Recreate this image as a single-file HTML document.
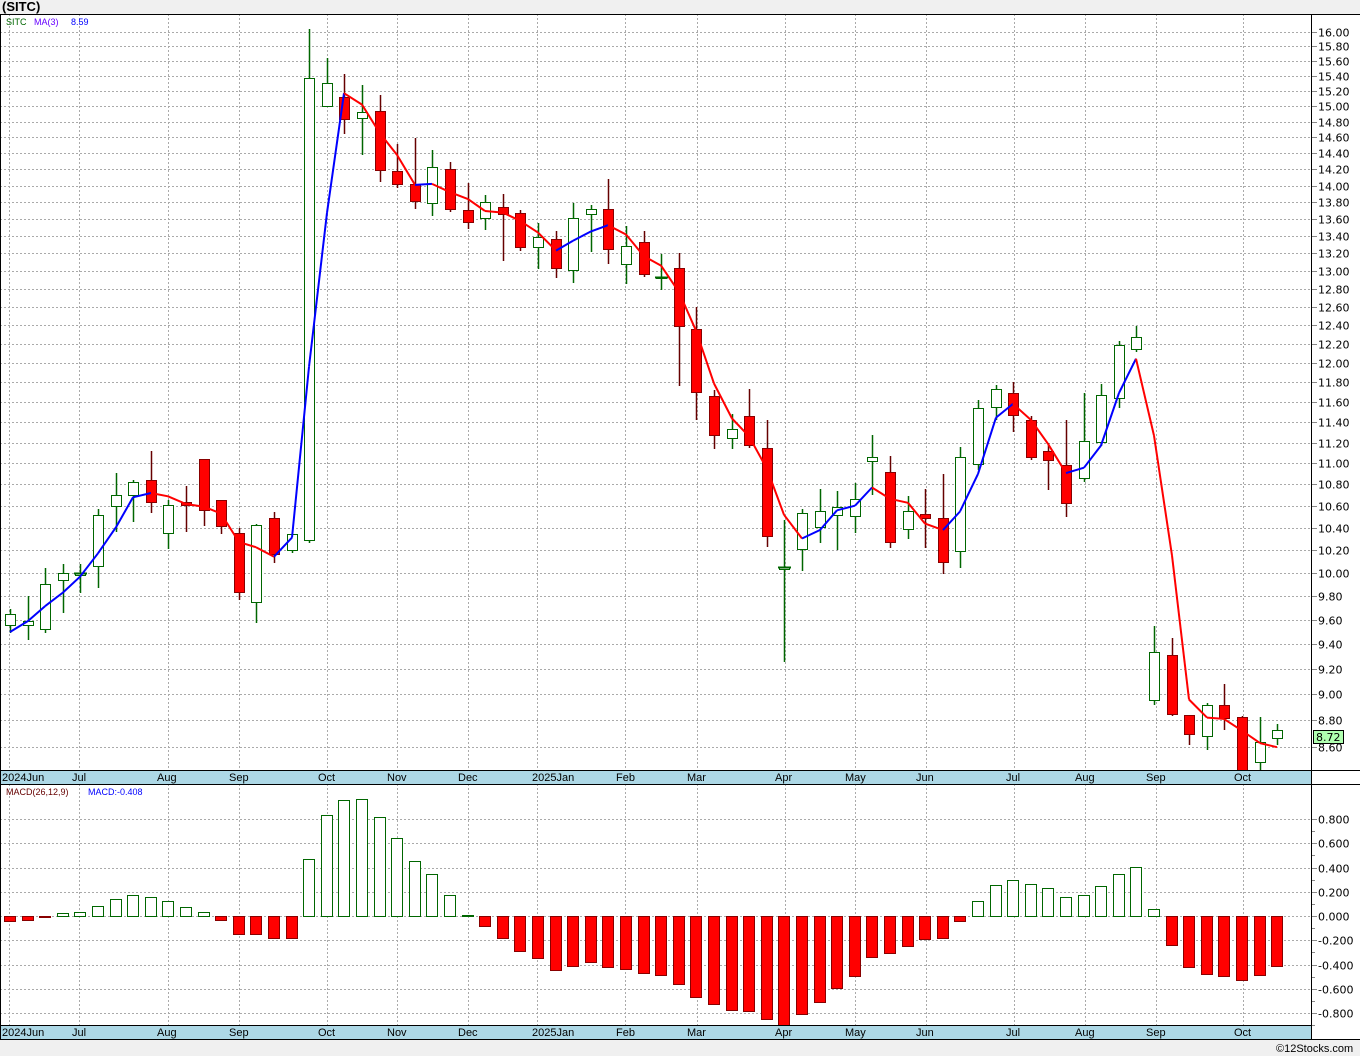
<!DOCTYPE html>
<html><head><meta charset="utf-8"><style>
html,body{margin:0;padding:0;background:#f0f0f0;width:1360px;height:1056px;overflow:hidden}
svg text{font-family:"Liberation Sans","DejaVu Sans",sans-serif}
svg text.ax{font-family:"DejaVu Sans","Liberation Sans",sans-serif}
</style></head><body>
<svg id="s" width="1360" height="1056" xmlns="http://www.w3.org/2000/svg"></svg>
<script>
var S=document.getElementById('s'),h='';
function L(x1,y1,x2,y2,c,w,d){h+='<line x1="'+x1+'" y1="'+y1+'" x2="'+x2+'" y2="'+y2+'" stroke="'+c+'" stroke-width="'+(w||1)+'"'+(d?' stroke-dasharray="'+d+'"':'')+'/>';}
function R(x,y,w,hh,f,s){h+='<rect x="'+x+'" y="'+y+'" width="'+w+'" height="'+hh+'" fill="'+f+'"'+(s?' stroke="'+s+'"':'')+'/>';}
function T(x,y,t,c,sz,ex){h+='<text x="'+x+'" y="'+y+'" fill="'+c+'" font-size="'+(sz||11)+'" '+(ex||'')+'>'+t+'</text>';}
R(0,14,1360,1026,'#fff');
T(2,11,'(SITC)','#000',13,'font-weight="bold"');
function yp(p){return 32+1151*Math.log(16/p);}
for(var v=8.6;v<=16.001;v+=0.2){var y=Math.round(yp(v))+.5;L(0,y,1311,y,'#aaa',1,'2,2');L(1311,y,1317,y,'#888');T(1318,y+4,v.toFixed(2),'#000',11,'class="ax"');}
var mx=[9,79,168,239,327,397,468,537,625,697,785,855,926,1014,1085,1156,1243];
mx.forEach(function(x){L(x+.5,14,x+.5,770,'#aaa',1,'2,2');L(x+.5,784,x+.5,1025,'#aaa',1,'2,2');});
function ym(v){return 916-v*121.25;}
for(var k=-4;k<=4;k++){var v=k*0.2;var y=Math.round(ym(v))+.5;L(0,y,1311,y,'#aaa',1,'2,2');L(1311,y,1317,y,'#888');T(1318,y+4,(k<0?'-':'')+Math.abs(v).toFixed(3),'#000',11,'class="ax"');}
for(var v=-0.9;v<=0.9;v+=0.2){var y=Math.round(ym(v))+.5;L(1311,y,1315,y,'#888');}
var C=[['g',614,625,609,633],['g',621,625,596,640],['g',584,629,568,633],['g',573,580,564,613],['g',573,575,564,593],['g',515,566,509,588],['g',495,506,473,532],['g',482,495,480,522],['r',480,502,451,513],['g',505,533,500,549],['r',502,505,486,532],['r',459,510,459,526],['r',500,526,500,534],['r',533,592,528,600],['g',525,602,524,623],['r',518,554,512,563],['g',534,550,534,553],['g',78,540,29,543],['g',83,106,58,106],['r',97,119,74,134],['g',112,118,85,155],['r',111,170,95,182],['r',171,184,144,188],['r',184,201,138,209],['g',167,203,150,216],['r',169,209,162,212],['r',210,222,183,229],['g',202,218,195,230],['r',207,214,194,261],['r',213,247,210,251],['g',237,247,223,269],['r',239,268,231,278],['g',218,270,203,283],['g',209,214,205,252],['r',209,249,179,264],['g',246,264,226,284],['r',242,274,231,277],['g',277,278,254,290],['r',268,326,253,386],['r',329,392,307,420],['r',396,435,390,449],['g',429,438,414,449],['r',416,445,389,448],['r',448,536,420,547],['g',567,569,520,662],['g',513,549,509,571],['g',511,527,489,543],['g',507,515,491,550],['g',499,516,483,533],['g',457,461,435,495],['r',472,542,456,548],['g',511,529,496,539],['r',514,518,489,548],['r',518,562,474,574],['g',457,551,447,568],['g',408,464,400,470],['g',389,407,385,420],['r',393,415,382,432],['r',420,457,416,460],['r',451,460,443,490],['r',465,503,420,517],['g',441,478,393,482],['g',395,442,384,446],['g',345,398,341,408],['g',337,349,326,352],['g',652,700,626,705],['r',655,714,638,716],['r',715,734,715,745],['g',705,736,703,750],['r',705,718,684,730],['r',717,770,716,775],['g',742,762,717,770],['g',730,738,724,745]];
var M=[-921,-920,-917,913,912,906,899,895,897,901,907,912,-920,-934,-934,-938,-938,859,815,800,799,817,838,861,874,895,915,-926,-938,-951,-958,-970,-966,-962,-967,-969,-973,-975,-984,-997,-1004,-1010,-1011,-1019,-1025,-1014,-1002,-988,-976,-957,-953,-946,-939,-938,-921,901,885,880,884,888,897,895,886,874,867,909,-945,-967,-974,-976,-980,-975,-966];
function xc(i){return Math.round(10+17.6*i);}
M.forEach(function(v,i){var x=xc(i)-6;if(v<0){R(x+.5,916.5,11,(-v)-916,'#f00','#800');}else{R(x+.5,v+.5,11,916-v,'#fff','#060');}});
var closes=[];
C.forEach(function(c,i){var x=xc(i);var up=c[0]=='g';var wc=up?'#060':'#600';
L(x+.5,c[3],x+.5,c[4],wc,1.5);
var hh=Math.max(1,c[2]-c[1]);
if(up){R(x-5+.5,c[1]+.5,10,hh,'#fff','#060');closes.push(c[1]);}else{R(x-5+.5,c[1]+.5,10,hh,'#f00','#800');closes.push(c[2]);}
if(up&&c[2]-c[1]<3){L(x-6,c[1]+.5,x+7,c[1]+.5,'#060',2);}
});
function pr(y){return 16*Math.exp(-(y-32)/1151);}
var ma=[];for(var i=0;i<closes.length;i++){var a=closes.slice(Math.max(0,i-2),i+1).map(pr);var s=a.reduce(function(p,q){return p+q},0)/a.length;ma.push(yp(s));}
ma[0]=632;ma[1]=621;
for(var i=1;i<ma.length;i++){var col=ma[i]<ma[i-1]?'#00f':'#f00';L(xc(i-1),ma[i-1].toFixed(1),xc(i),ma[i].toFixed(1),col,2);}
R(0,770,1311,14,'#add8e6');L(0,770.5,1360,770.5,'#000');L(0,784.5,1360,784.5,'#000');
R(0,1025,1311,14,'#add8e6');L(0,1025.5,1311,1025.5,'#000');L(0,1039.5,1360,1039.5,'#000');
R(1312,1040,48,16,'#f0f0f0');
var lb=[[2,'2024Jun'],[72,'Jul'],[157,'Aug'],[229,'Sep'],[318,'Oct'],[387,'Nov'],[458,'Dec'],[532,'2025Jan'],[616,'Feb'],[687,'Mar'],[775,'Apr'],[845,'May'],[916,'Jun'],[1006,'Jul'],[1075,'Aug'],[1146,'Sep'],[1234,'Oct']];
lb.forEach(function(l){T(l[0],781,l[1],'#000',11);T(l[0],1036,l[1],'#000',11);});
L(0,14.5,1360,14.5,'#000');L(1311.5,14,1311.5,1040,'#000');L(0.5,14,0.5,1040,'#000');
T(6,25,'SITC','#060',9);T(34,25,'MA(3)','#60f',9);T(71,25,'8.59','#00f',9);
T(6,795,'MACD(26,12,9)','#600',9);T(88,795,'MACD:-0.408','#00f',9);
R(1313.5,730.5,30,13,'#b0ffb0','#000');T(1316,741,'8.72','#000',11,'class="ax"');
T(1276,1052,'©12Stocks.com','#000',11);
S.innerHTML=h;
</script>
</body></html>
